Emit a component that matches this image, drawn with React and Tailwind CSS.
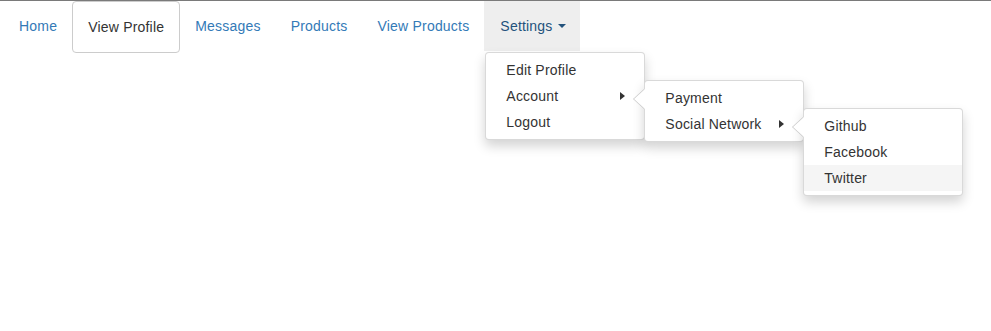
import React from 'react'

function Caret() {
  return (
    <span className="absolute right-[19px] top-1/2 -translate-y-1/2 w-0 h-0 border-y-[4px] border-y-transparent border-l-[5px] border-l-[#333]" />
  )
}

function Tail() {
  return (
    <>
      <span className="absolute left-[-12px] top-[8px] w-0 h-0 border-y-[10px] border-y-transparent border-r-[11px] border-r-[#c8c8c8]" />
      <span className="absolute left-[-11px] top-[8px] w-0 h-0 border-y-[10px] border-y-transparent border-r-[11px] border-r-white" />
    </>
  )
}

function Menu({ children, className = '' }) {
  return (
    <ul
      className={`absolute w-[160px] bg-white border border-black/15 rounded-[4px] py-[4px] shadow-[0_6px_12px_rgba(0,0,0,0.175)] ${className}`}
    >
      {children}
    </ul>
  )
}

function Item({ label, active, children }) {
  return (
    <li className="relative">
      <a
        className={`block px-[20px] py-[3px] leading-[20px] text-[#333] whitespace-nowrap ${
          active ? 'bg-[#f5f5f5]' : ''
        }`}
      >
        {label}
      </a>
      {children}
    </li>
  )
}

export default function App() {
  const links = ['Messages', 'Products', 'View Products']

  return (
    <div className="min-h-[331px] bg-white border-t border-[#7a7a7a] font-['Liberation_Sans',Arial,sans-serif] text-[14px] tracking-[0.2px]">
      <ul className="flex items-start pl-[4px]">
        <li>
          <a className="block px-[15px] py-[15px] leading-[20px] text-[#337ab7]">Home</a>
        </li>
        <li>
          <a className="block px-[15px] py-[15px] leading-[20px] text-[#333] border border-[#ccc] rounded-[4px]">
            View Profile
          </a>
        </li>
        {links.map((l) => (
          <li key={l}>
            <a className="block px-[15px] py-[15px] leading-[20px] text-[#337ab7]">{l}</a>
          </li>
        ))}
        <li className="relative">
          <a className="flex items-center pl-[16px] pr-[14px] py-[15px] leading-[20px] text-[#23527c] bg-[#eee]">
            Settings
            <span className="ml-[5px] w-0 h-0 border-x-[4px] border-x-transparent border-t-[4px] border-t-[#23527c]" />
          </a>
          <Menu className="left-[1px] top-full mt-[1px] z-10">
            <Item label="Edit Profile" />
            <Item label="Account">
              <Caret />
              <Menu className="left-full top-[-3px] z-20">
                <Tail />
                <Item label="Payment" />
                <Item label="Social Network">
                  <Caret />
                  <Menu className="left-full top-[-3px] z-30">
                    <Tail />
                    <Item label="Github" />
                    <Item label="Facebook" />
                    <Item label="Twitter" active />
                  </Menu>
                </Item>
              </Menu>
            </Item>
            <Item label="Logout" />
          </Menu>
        </li>
      </ul>
    </div>
  )
}
